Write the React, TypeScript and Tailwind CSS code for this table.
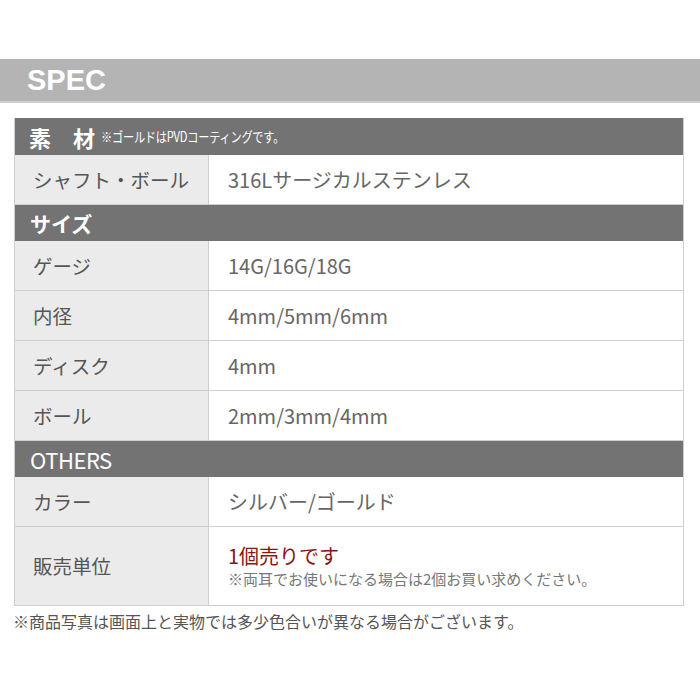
const font = { fontFamily: '"Noto Sans CJK JP", "Noto Sans", sans-serif' }

const SectionHead = ({ children }: { children: React.ReactNode }) => (
  <div className="flex h-[36px] items-center bg-[#737373] px-[15px] text-[21px] font-bold leading-none text-white">
    {children}
  </div>
)

const Row = ({
  label,
  children,
  tall,
}: {
  label: string
  children: React.ReactNode
  tall?: boolean
}) => (
  <div
    className={`grid grid-cols-[194px_1fr] border-b border-[#cfcfcf] ${tall ? 'h-[79px]' : 'h-[50px]'}`}
  >
    <div className="flex items-center border-r border-[#cfcfcf] bg-[#ebebeb] pl-[18px] text-[19.5px] text-[#555]">
      {label}
    </div>
    <div className="flex items-center pl-[19px] text-[20px] text-[#666]">{children}</div>
  </div>
)

export default function App() {
  return (
    <div className="h-[700px] w-[700px] bg-white" style={font}>
      <div className="h-[59px]" />
      {/* SPEC bar */}
      <div className="flex h-[44px] items-center border-b-2 border-[#cfcfcf] bg-[#b4b4b4] pl-[27px]">
        <span className="text-[29px] font-bold leading-none text-white" style={{ fontFamily: '"Liberation Sans", Arial, sans-serif' }}>
          SPEC
        </span>
      </div>

      {/* Table */}
      <div className="mx-[14px] mt-[15px] w-[670px] border-x border-[#cfcfcf]">
        <div className="flex h-[37px] items-center bg-[#737373] px-[14px] text-white">
          <span className="text-[22px] font-bold leading-none">素　材</span>
          <span className="ml-[6px] origin-left scale-x-[0.8] whitespace-nowrap text-[14px] tracking-[-0.3px]">
            ※ゴールドはPVDコーティングです。
          </span>
        </div>
        <Row label="シャフト・ボール">316Lサージカルステンレス</Row>

        <SectionHead>サイズ</SectionHead>
        <Row label="ゲージ">14G/16G/18G</Row>
        <Row label="内径">4mm/5mm/6mm</Row>
        <Row label="ディスク">4mm</Row>
        <Row label="ボール">2mm/3mm/4mm</Row>

        <SectionHead>
          <span className="text-[22px] font-normal tracking-[-0.5px]">OTHERS</span>
        </SectionHead>
        <Row label="カラー">シルバー/ゴールド</Row>
        <Row label="販売単位" tall>
          <div className="flex flex-col">
            <span className="text-[20px] leading-[24px] text-[#8b1414]">1個売りです</span>
            <span className="text-[15px] leading-[21px] text-[#777]">
              ※両耳でお使いになる場合は2個お買い求めください。
            </span>
          </div>
        </Row>
      </div>

      <p className="ml-[13px] mt-[3px] text-[16px] text-[#555]">
        ※商品写真は画面上と実物では多少色合いが異なる場合がございます。
      </p>
    </div>
  )
}
